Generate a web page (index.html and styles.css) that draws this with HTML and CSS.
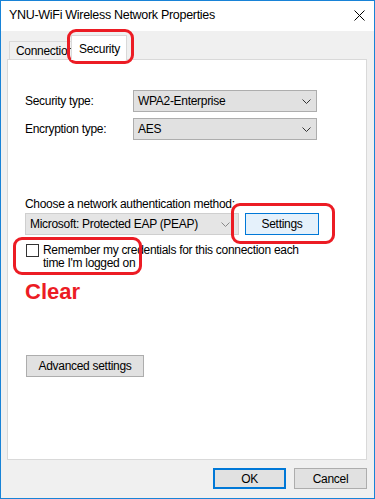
FILE: index.html
```html
<!DOCTYPE html>
<html lang="en">
<head>
    <meta charset="UTF-8">
    <meta name="viewport" content="width=device-width, initial-scale=1.0">
    <title>YNU-WiFi Wireless Network Properties</title>
    <link rel="stylesheet" href="styles.css">
</head>
<body>
    <div class="window">
        <div class="title-bar">
            <span class="title">YNU-WiFi Wireless Network Properties</span>
            <svg class="close-icon" width="11" height="11" viewBox="0 0 11 11">
                <path d="M0.5 0.5 L10.5 10.5 M10.5 0.5 L0.5 10.5" stroke="#000" stroke-width="1" fill="none"/>
            </svg>
        </div>

        <div class="dialog-body">
            <div class="tabs">
                <div class="tab">Connection</div>
                <div class="tab tab-active">Security</div>
            </div>

            <div class="panel">
                <div class="type-grid">
                    <label>Security type:</label>
                    <div class="select">
                        <span>WPA2-Enterprise</span>
                        <svg class="chevron" width="9" height="5" viewBox="0 0 9 5"><path d="M0.5 0.5 L4.5 4.5 L8.5 0.5" stroke="#333" fill="none"/></svg>
                    </div>
                    <label>Encryption type:</label>
                    <div class="select">
                        <span>AES</span>
                        <svg class="chevron" width="9" height="5" viewBox="0 0 9 5"><path d="M0.5 0.5 L4.5 4.5 L8.5 0.5" stroke="#333" fill="none"/></svg>
                    </div>
                </div>

                <div class="auth-label">Choose a network authentication method:</div>
                <div class="auth-row">
                    <div class="select select-auth">
                        <span>Microsoft: Protected EAP (PEAP)</span>
                        <svg class="chevron" width="9" height="5" viewBox="0 0 9 5"><path d="M0.5 0.5 L4.5 4.5 L8.5 0.5" stroke="#888" fill="none"/></svg>
                    </div>
                    <button class="btn btn-settings">Settings</button>
                </div>

                <div class="remember">
                    <span class="checkbox"></span>
                    <span>Remember my credentials for this connection each<br>time I'm logged on</span>
                </div>

                <div class="clear-note">Clear</div>

                <button class="btn btn-advanced">Advanced settings</button>
            </div>

            <div class="footer">
                <button class="btn btn-ok">OK</button>
                <button class="btn">Cancel</button>
            </div>
        </div>

        <!-- red markup drawn over the dialog -->
        <div class="mark mark-tab"></div>
        <div class="mark mark-settings"></div>
        <div class="mark mark-remember"></div>
    </div>
</body>
</html>
```

FILE: styles.css
```css
* {
    box-sizing: border-box;
}

body {
    margin: 0;
    font-family: "Liberation Sans", Arial, sans-serif;
    font-size: 12px;
    letter-spacing: -0.3px;
    color: #000;
    background: #fff;
}

.window {
    position: relative;
    width: 375px;
    height: 499px;
    border: 1px solid #1883d7;
    background: #f0f0f0;
    display: flex;
    flex-direction: column;
}

.title-bar {
    height: 30px;
    background: #fff;
    display: flex;
    align-items: center;
    justify-content: space-between;
    padding: 0 9px 0 8px;
}

.title {
    font-size: 12.5px;
    margin-top: -2px;
}

.close-icon {
    margin-top: -2px;
}

.dialog-body {
    flex: 1;
    display: flex;
    flex-direction: column;
    padding: 4px 7px 0 6px;
}

.tabs {
    display: flex;
    align-items: flex-end;
    height: 25px;
    padding-left: 2px;
    margin-bottom: -1px;
}

.tab {
    height: 19px;
    padding: 0 6px;
    border: 1px solid #d9d9d9;
    border-bottom: none;
    background: #f0f0f0;
    line-height: 18px;
    width: 63px;
    white-space: nowrap;
}

.tab-active {
    position: relative;
    z-index: 1;
    height: 25px;
    width: 56px;
    margin-left: -1px;
    background: #fff;
    padding: 4px 7px 0;
    border-right: 1px solid #d9d9d9;
}

.panel {
    height: 401px;
    background: #fff;
    border: 1px solid #d9d9d9;
    padding: 30px 17px 0;
}

.type-grid {
    display: grid;
    grid-template-columns: 108px 184px;
    row-gap: 6px;
    align-items: center;
}

.select {
    height: 22px;
    background: #e1e1e1;
    border: 1px solid #adadad;
    display: flex;
    align-items: center;
    justify-content: space-between;
    padding: 0 5px 0 4px;
}

.auth-label {
    margin-top: 56px;
    line-height: 16px;
}

.auth-row {
    display: flex;
    gap: 6px;
    margin-top: 1px;
    align-items: center;
}

.select-auth {
    width: 214px;
    height: 22px;
    border-color: #cfcfcf;
    background: #e5e5e5;
    padding-right: 8px;
}

.btn {
    font-family: inherit;
    font-size: 12px;
    letter-spacing: inherit;
    color: #000;
    background: #e1e1e1;
    border: 1px solid #adadad;
    height: 22px;
    padding: 0;
    border-radius: 0;
}

.btn-settings {
    width: 74px;
    background: #e5f1fb;
    border-color: #0078d7;
}

.remember {
    display: flex;
    align-items: flex-start;
    gap: 4px;
    margin-top: 9px;
    line-height: 13px;
    padding-left: 1px;
    white-space: nowrap;
}

.checkbox {
    flex: none;
    width: 13px;
    height: 13px;
    border: 1px solid #333;
    background: #fff;
}

.clear-note {
    margin-top: 10px;
    font-size: 22px;
    font-weight: bold;
    letter-spacing: 0;
    color: #ec1c24;
    line-height: 24px;
}

.btn-advanced {
    display: block;
    margin-top: 51px;
    margin-left: 1px;
    width: 118px;
}

.footer {
    display: flex;
    justify-content: flex-end;
    gap: 8px;
    padding-top: 8px;
}

.footer .btn {
    width: 73px;
    height: 21px;
}

.btn-ok {
    border: 2px solid #0078d7;
}

.mark {
    position: absolute;
    border: 3px solid #ec1c24;
    border-radius: 9px;
}

.mark-tab {
    left: 66px;
    top: 28px;
    width: 67px;
    height: 35px;
}

.mark-settings {
    left: 230px;
    top: 202px;
    width: 104px;
    height: 41px;
}

.mark-remember {
    left: 12px;
    top: 236px;
    width: 129px;
    height: 38px;
}
```
